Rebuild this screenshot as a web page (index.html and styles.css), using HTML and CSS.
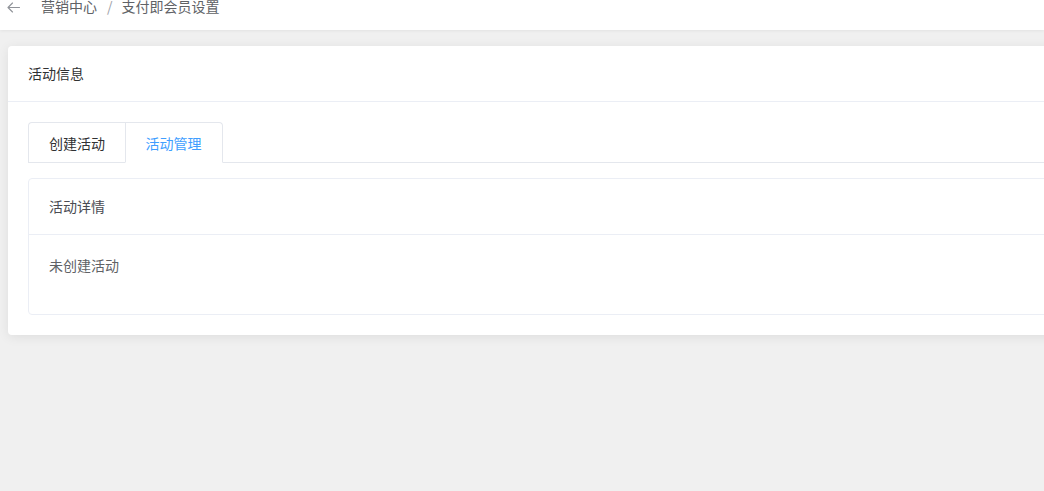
FILE: index.html
```html
<!DOCTYPE html>
<html lang="zh-CN">
<head>
<meta charset="utf-8">
<title>支付即会员设置</title>
<link rel="stylesheet" href="styles.css">
</head>
<body>
<header class="topbar">
  <span class="back">
    <svg width="13" height="11" viewBox="0 0 13 11" fill="none" stroke="#909399" stroke-width="1.1" stroke-linecap="round" stroke-linejoin="round"><path d="M12.5 5.5H1M5.5 1L1 5.5L5.5 10"/></svg>
  </span>
  <nav class="crumbs">
    <span class="crumb">营销中心</span>
    <span class="sep">/</span>
    <span class="crumb current">支付即会员设置</span>
  </nav>
</header>
<main class="main">
  <section class="card">
    <div class="card-header">活动信息</div>
    <div class="card-body">
      <div class="tabs">
        <div class="tab">创建活动</div>
        <div class="tab active">活动管理</div>
        <div class="tabs-rest"></div>
      </div>
      <div class="inner-card">
        <div class="inner-header">活动详情</div>
        <div class="inner-body">
          <p class="empty">未创建活动</p>
        </div>
      </div>
    </div>
  </section>
</main>
</body>
</html>
```

FILE: styles.css
```css
html, body {
  margin: 0;
  padding: 0;
  overflow: hidden;
}
body {
  background: #f0f0f0;
  font-family: "Noto Sans CJK SC", "Microsoft YaHei", sans-serif;
  font-size: 14px;
  color: #303133;
  width: 1044px;
  height: 491px;
}
.topbar {
  height: 30px;
  background: #fff;
  box-shadow: 0 1px 3px rgba(0, 0, 0, 0.06);
  display: flex;
  align-items: flex-start;
  box-sizing: border-box;
  padding-left: 7px;
  position: relative;
  z-index: 1;
}
.back {
  display: flex;
  height: 12px;
  align-items: center;
  margin-top: 1px;
}
.back svg { display: block; }
.crumbs {
  display: flex;
  margin-left: 21px;
  margin-top: -3px;
  line-height: 18px;
  color: #606266;
}
.sep {
  color: #9ea1a8;
  margin: 0 9px 0 10px;
}
.main {
  padding: 16px 0 0 8px;
  width: 1100px;
}
.card {
  background: #fff;
  border-radius: 4px;
  box-shadow: 0 2px 12px 0 rgba(0, 0, 0, 0.08);
  overflow: hidden;
}
.card-header {
  padding: 17px 20px 18px;
  line-height: 20px;
  border-bottom: 1px solid #ebeef5;
  color: #303133;
}
.card-body {
  padding: 20px;
}
.tabs {
  display: flex;
  height: 41px;
  box-sizing: border-box;
  margin-bottom: 15px;
}
.tab {
  box-sizing: border-box;
  width: 97px;
  height: 41px;
  line-height: 40px;
  text-align: center;
  border: 1px solid #e4e7ed;
  border-right: none;
  border-bottom: 1px solid #e4e7ed;
  color: #303133;
}
.tab:first-child {
  border-radius: 4px 0 0 0;
}
.tab.active {
  width: 98px;
  padding-right: 1px;
  color: #409eff;
  border-right: 1px solid #e4e7ed;
  border-bottom-color: #fff;
  border-radius: 0 4px 0 0;
}
.tabs-rest {
  flex: 1;
  border-bottom: 1px solid #e4e7ed;
}
.inner-card {
  border: 1px solid #ebeef5;
  border-radius: 4px;
}
.inner-header {
  padding: 17px 20px 18px;
  line-height: 20px;
  border-bottom: 1px solid #ebeef5;
  color: #4a4c52;
}
.inner-body {
  padding: 20px 20px 20px;
}
.empty {
  margin: 0;
  line-height: 20px;
  height: 39px;
  color: #606266;
}
```
